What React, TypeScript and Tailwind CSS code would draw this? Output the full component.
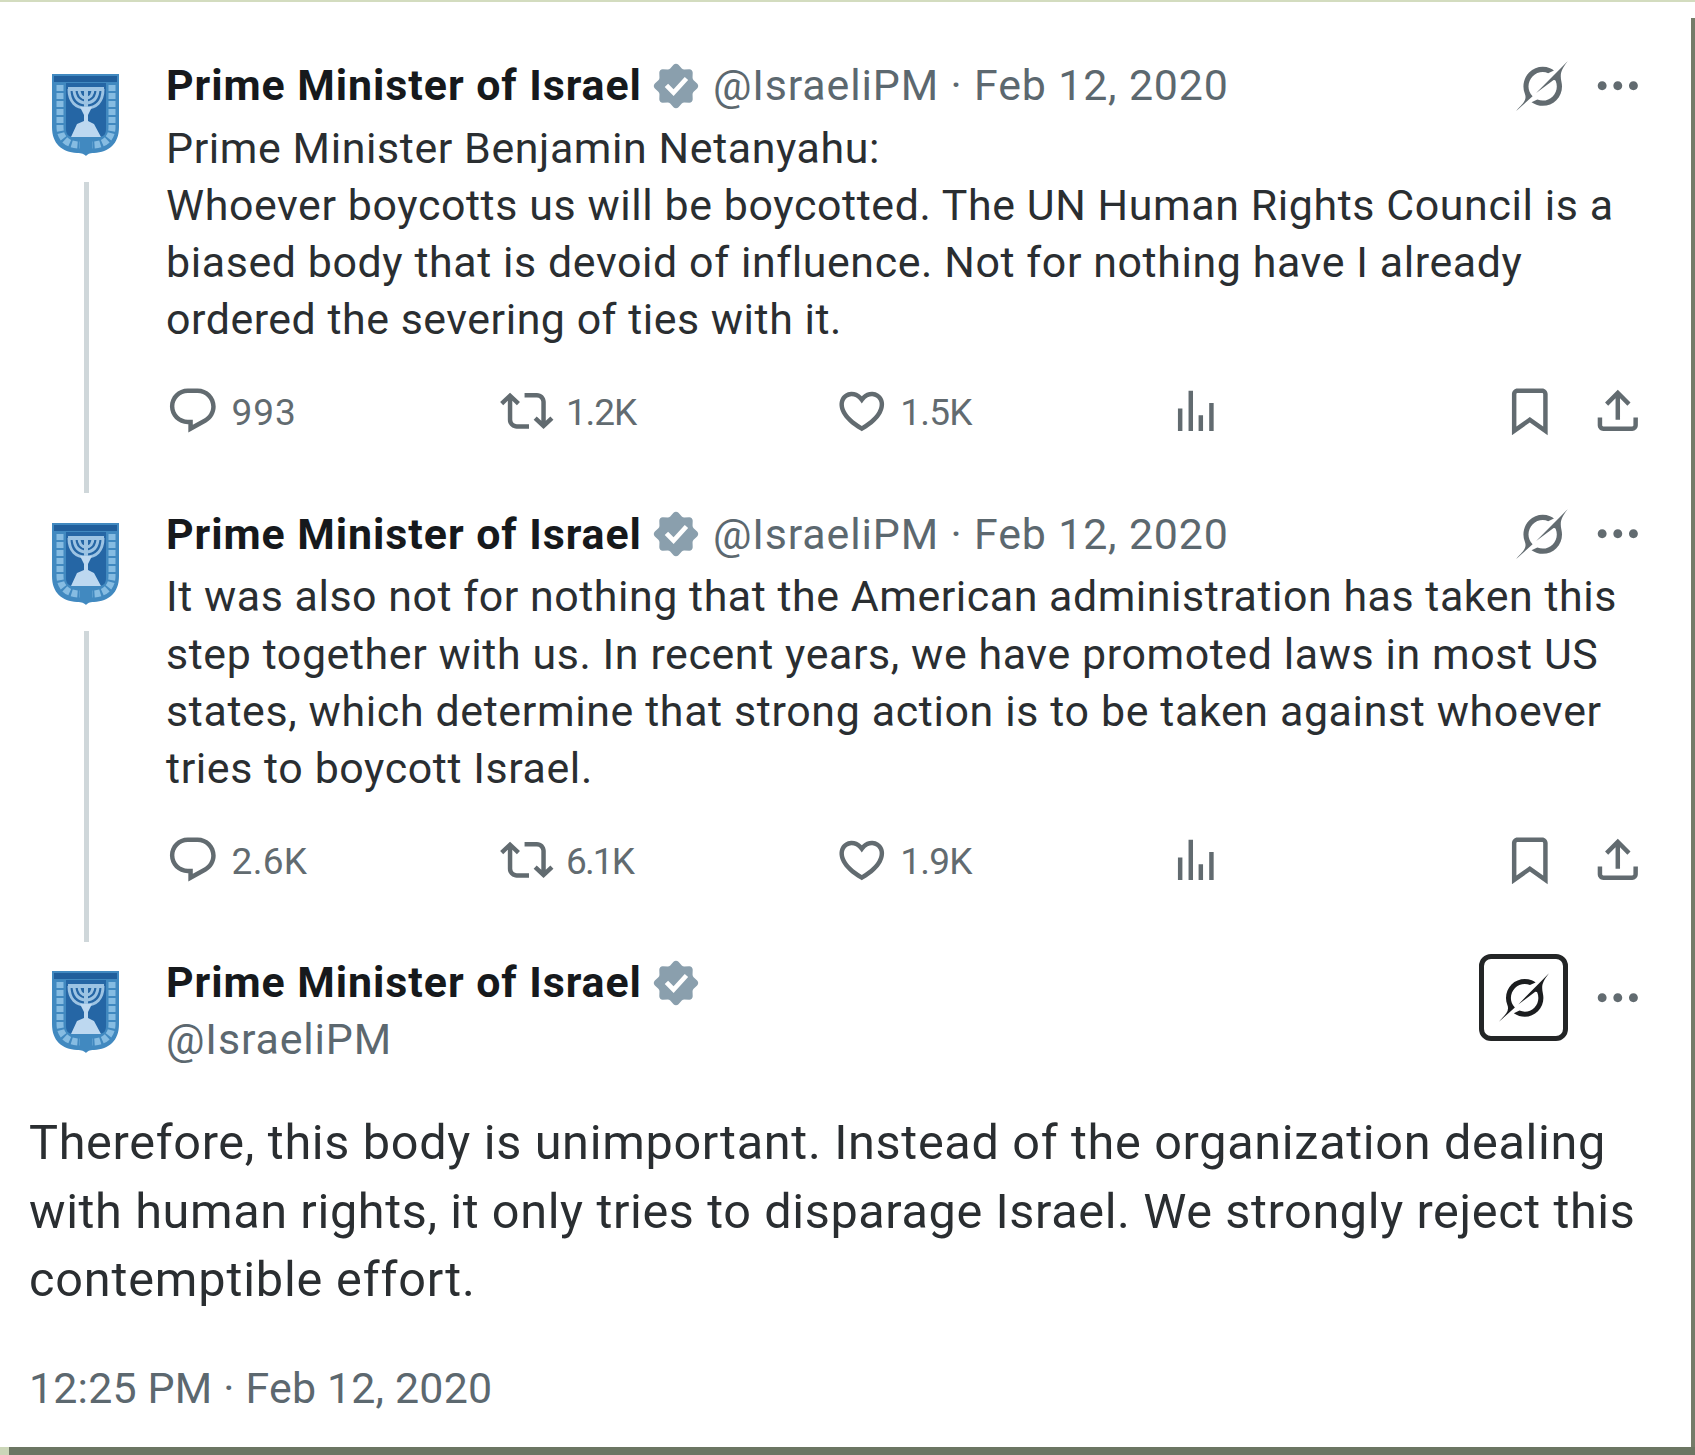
import type { ReactNode } from 'react'

const icons = {
  reply: 'M1.751 10c0-4.42 3.584-8 8.005-8h4.366c4.49 0 8.129 3.64 8.129 8.13 0 2.96-1.607 5.68-4.196 7.11l-8.054 4.46v-3.69h-.067c-4.49.1-8.183-3.51-8.183-8.01zm8.005-6c-3.317 0-6.005 2.69-6.005 6 0 3.37 2.77 6.08 6.138 6.01l.351-.01h1.761v2.3l5.087-2.81c1.951-1.08 3.163-3.13 3.163-5.36 0-3.39-2.744-6.13-6.129-6.13H9.756z',
  repost: 'M4.5 3.88l4.432 4.14-1.364 1.46L5.5 7.55V16c0 1.1.896 2 2 2H13v2H7.5c-2.209 0-4-1.79-4-4V7.55L1.432 9.48.068 8.02 4.5 3.88zM16.5 6H11V4h5.5c2.209 0 4 1.79 4 4v8.45l2.068-1.93 1.364 1.46-4.432 4.14-4.432-4.14 1.364-1.46 2.068 1.93V8c0-1.1-.896-2-2-2z',
  like: 'M16.697 5.5c-1.222-.06-2.679.51-3.89 2.16l-.805 1.09-.806-1.09C9.984 6.01 8.526 5.44 7.304 5.5c-1.243.07-2.349.78-2.91 1.91-.552 1.12-.633 2.78.479 4.82 1.074 1.97 3.257 4.27 7.129 6.61 3.87-2.34 6.052-4.64 7.126-6.61 1.111-2.04 1.03-3.7.477-4.82-.561-1.13-1.666-1.84-2.908-1.91zm4.187 7.69c-1.351 2.48-4.001 5.12-8.379 7.67l-.503.3-.504-.3c-4.379-2.55-7.029-5.19-8.382-7.67-1.36-2.5-1.41-4.86-.514-6.67.887-1.79 2.647-2.91 4.601-3.01 1.651-.09 3.368.56 4.798 2.01 1.429-1.45 3.146-2.1 4.796-2.01 1.954.1 3.714 1.22 4.601 3.01.896 1.81.846 4.17-.514 6.67z',
  views: 'M8.75 21V3h2v18h-2zM18 21V8.5h2V21h-2zM4 21l.004-10h2L6 21H4zm9.248 0v-7h2v7h-2z',
  bookmark: 'M4 4.5C4 3.12 5.119 2 6.5 2h11C18.881 2 20 3.12 20 4.5v18.44l-8-5.71-8 5.71V4.5zM6.5 4c-.276 0-.5.22-.5.5v14.56l6-4.29 6 4.29V4.5c0-.28-.224-.5-.5-.5h-11z',
  share: 'M12 2.59l5.7 5.7-1.41 1.42L13 6.41V16h-2V6.41l-3.3 3.3-1.41-1.42L12 2.59zM21 15l-.02 3.51c0 1.38-1.12 2.49-2.5 2.49H5.5C4.11 21 3 19.88 3 18.5V15h2v3.5c0 .28.22.5.5.5h12.98c.28 0 .5-.22.5-.5L19 15h2z',
  more: 'M3 12c0-1.1.9-2 2-2s2 .9 2 2-.9 2-2 2-2-.9-2-2zm9 2c1.1 0 2-.9 2-2s-.9-2-2-2-2 .9-2 2 .9 2 2 2zm7 0c1.1 0 2-.9 2-2s-.9-2-2-2-2 .9-2 2 .9 2 2 2z',
}

function Icon({ name }: { name: keyof typeof icons }) {
  return (
    <svg viewBox="0 0 24 24" className="size-[53.6px] shrink-0 fill-[#626b70]">
      <path d={icons[name]} />
    </svg>
  )
}

function Grok({ className }: { className: string }) {
  return (
    <svg viewBox="0 0 33 32" className={className}>
      <path d="M12.745 20.54l10.97-8.19c.539-.4 1.307-.244 1.564.38 1.349 3.288.746 7.241-1.938 9.955-2.683 2.714-6.417 3.31-9.83 1.954l-3.728 1.745c5.347 3.697 11.84 2.782 15.898-1.324 3.219-3.255 4.216-7.692 3.284-11.693l.008.009c-1.351-5.878.332-8.227 3.782-13.031L33 0l-4.54 4.59v-.014L12.743 20.544m-2.263 1.987c-3.837-3.707-3.175-9.446.1-12.755 2.42-2.449 6.388-3.448 9.852-1.979l3.72-1.737c-.67-.49-1.53-1.017-2.515-1.387-4.455-1.854-9.789-.931-13.41 2.728-3.483 3.523-4.579 8.94-2.697 13.561 1.405 3.454-.899 5.898-3.22 8.364C1.49 30.2.666 31.074 0 32l10.478-9.466" />
    </svg>
  )
}

function Verified() {
  return (
    <svg viewBox="0 0 22 22" className="ml-2 size-[52px] shrink-0">
      <path fill="#fff" d="M5 5h12v12H5z" />
      <path
        fill="#8a9fad"
        fillRule="evenodd"
        d="M12.05 2.056c-.568-.608-1.532-.608-2.1 0l-1.393 1.49c-.284.303-.685.47-1.1.455L5.42 3.932c-.832-.028-1.514.654-1.486 1.486l.069 2.039c.014.415-.152.816-.456 1.1l-1.49 1.392c-.608.568-.608 1.533 0 2.101l1.49 1.393c.304.284.47.684.456 1.1l-.07 2.038c-.027.832.655 1.514 1.487 1.486l2.038-.069c.415-.014.816.152 1.1.455l1.392 1.49c.569.609 1.533.609 2.102 0l1.393-1.49c.283-.303.684-.47 1.099-.455l2.038.069c.832.028 1.515-.654 1.486-1.486L18 14.542c-.015-.415.152-.815.455-1.099l1.49-1.393c.608-.568.608-1.533 0-2.101l-1.49-1.393c-.303-.283-.47-.684-.455-1.1l.068-2.038c.029-.832-.654-1.514-1.486-1.486l-2.038.07c-.415.013-.816-.153-1.1-.456l-1.392-1.49zm-5.817 9.367l1.429-1.371 2.303 2.303 4.74-5.168 1.434 1.308L9.992 15.2l-3.76-3.776z"
      />
    </svg>
  )
}

function Avatar() {
  return (
    <svg viewBox="0 0 114 114" className="size-[114px] shrink-0">
      <path d="M23 14h67v53c0 17-10 25-25 26-5 0-6 1-8 3-2-2-4-3-9-3-15-1-25-9-25-26z" fill="#4189c0" />
      <path d="M25 16h63v6H25z" fill="#215f9c" />
      <path d="M37 23h40v46c0 6-3 8-8 8H45c-5 0-8-2-8-8z" fill="#2566a5" />
      {/* olive branches */}
      <g fill="none" stroke="#86bce2" strokeWidth="7" strokeDasharray="6 2">
        <path d="M31 25v42c0 12 8 18 20 18" />
        <path d="M83 25v42c0 12-8 18-20 18" />
      </g>
      <g fill="none" stroke="#9cc3e3" strokeWidth="3">
        <path d="M40 29c0 13 7 19 17 19s17-6 17-19" />
        <path d="M45 29c0 9 5 14 12 14s12-5 12-14" />
        <path d="M50 29c0 6 3 9 7 9s7-3 7-9" />
      </g>
      <path d="M39 27h36v4H39zM55 27h4v36h-4z" fill="#9cc3e3" />
      <path d="M51 47h12l-4 8v6l6 3 7 13H42l6-13 7-3v-6z" fill="#bdd8f0" />
    </svg>
  )
}

function Name() {
  return (
    <>
      <span className="font-bold tracking-[0.94px] text-[#16191c]">Prime Minister of Israel</span>
      <Verified />
    </>
  )
}

function Stat({ icon, count }: { icon: keyof typeof icons; count?: ReactNode }) {
  return (
    <div className="flex w-[334.3px] items-center">
      <Icon name={icon} />
      {count && <span className="mt-[3px] ml-3 text-[37px] leading-[57px] font-[450]">{count}</span>}
    </div>
  )
}

type Tweet = { replies: ReactNode; reposts: ReactNode; likes: ReactNode; children: ReactNode }

function ThreadTweet({ replies, reposts, likes, children }: Tweet) {
  return (
    <article className="flex h-[448.6px] pr-12 pl-[29px]">
      <div className="flex flex-col items-center pt-[3px]">
        <Avatar />
        <div className="mt-2 h-[311px] w-[5px] bg-[#cfd7da]" />
      </div>
      <div className="ml-[23px] grow">
        <div className="flex h-[57.2px] items-center whitespace-nowrap">
          <Name />
          <span className="ml-[11px] tracking-[0.86px] text-[#5c686f]">@IsraeliPM · Feb 12, 2020</span>
          <Grok className="ml-auto h-[50px] w-[52px] fill-[#626b70]" />
          <div className="ml-[23px]">
            <Icon name="more" />
          </div>
        </div>
        <div className="mt-[5.7px] tracking-[0.6px] whitespace-nowrap">{children}</div>
        <div className="mt-[34px] flex h-[57.2px] items-center text-[#626b70]">
          <Stat icon="reply" count={replies} />
          <Stat icon="repost" count={reposts} />
          <Stat icon="like" count={likes} />
          <Stat icon="views" />
          <div className="flex gap-[34px]">
            <Icon name="bookmark" />
            <Icon name="share" />
          </div>
        </div>
      </div>
    </article>
  )
}

export default function App() {
  return (
    <div className="flex h-[1455px] w-[1695px] flex-col overflow-hidden bg-white font-['Roboto',sans-serif] text-[42.9px] leading-[57.2px] text-[#2a2e31]">
      <div className="h-[2px] shrink-0 bg-[#d3dcbf]" />
      <div className="flex h-[1445px] shrink-0">
        <main className="w-[1691px] pt-[55px]">
          <ThreadTweet
            replies={<span className="tracking-[0.9px]">993</span>}
            reposts={<span className="tracking-[-1.1px]">1.2K</span>}
            likes={<span className="tracking-[-0.8px]">1.5K</span>}
          >
            <p>Prime Minister Benjamin Netanyahu:</p>
            <p>Whoever boycotts us will be boycotted. The UN Human Rights Council is a</p>
            <p>biased body that is devoid of influence. Not for nothing have I already</p>
            <p className="tracking-[0.53px]">ordered the severing of ties with it.</p>
          </ThreadTweet>
          <ThreadTweet
            replies={<span className="tracking-[0.3px]">2.6K</span>}
            reposts={<span className="tracking-[-1.8px]">6.1K</span>}
            likes={<span className="tracking-[-0.8px]">1.9K</span>}
          >
            <p className="tracking-[0.55px]">It was also not for nothing that the American administration has taken this</p>
            <p>step together with us. In recent years, we have promoted laws in most US</p>
            <p className="tracking-[0.64px]">states, which determine that strong action is to be taken against whoever</p>
            <p>tries to boycott Israel.</p>
          </ThreadTweet>
          <article>
            <div className="flex h-[155px] pr-[46px] pl-[29px]">
              <div className="pt-[3px]">
                <Avatar />
              </div>
              <div className="ml-[23px]">
                <div className="flex h-[57.2px] items-center whitespace-nowrap">
                  <Name />
                </div>
                <p className="tracking-[0.86px] text-[#5c686f]">@IsraeliPM</p>
              </div>
              <div className="ml-auto flex h-[87px] items-center">
                <div className="flex h-[87px] w-[89px] items-center justify-center rounded-[12px] border-[5px] border-[#232526]">
                  <Grok className="h-[49px] w-[50px] fill-[#1b1d1f]" />
                </div>
                <div className="ml-[23px]">
                  <Icon name="more" />
                </div>
              </div>
            </div>
            <div className="pl-[29px] text-[48.6px] leading-[68.6px] whitespace-nowrap">
              <p className="tracking-[0.68px]">Therefore, this body is unimportant. Instead of the organization dealing</p>
              <p className="tracking-[0.62px]">with human rights, it only tries to disparage Israel. We strongly reject this</p>
              <p className="tracking-[0.84px]">contemptible effort.</p>
            </div>
            <p className="mt-[45px] pl-[29px] tracking-[0.19px] text-[#5c686f]">12:25 PM · Feb 12, 2020</p>
          </article>
        </main>
        <div className="mt-4 w-1 bg-[#747c69]" />
      </div>
      <div className="flex h-2 shrink-0">
        <div className="w-[9px] bg-[#cbd6b8]" />
        <div className="grow bg-[#6c7663]" />
      </div>
    </div>
  )
}
